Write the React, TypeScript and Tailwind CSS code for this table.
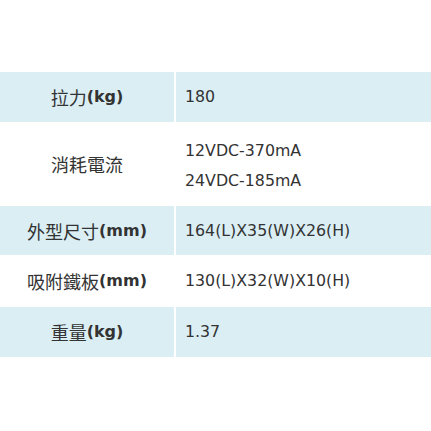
import React from "react";

const latin = "font-['DejaVu_Sans','Noto_Sans_CJK_TC',sans-serif]";

type Row = { cjk: string; unit?: string; values: string[]; blue: boolean; h: string };

const rows: Row[] = [
  { cjk: "拉力", unit: "(kg)", values: ["180"], blue: true, h: "h-[50px]" },
  { cjk: "消耗電流", values: ["12VDC-370mA", "24VDC-185mA"], blue: false, h: "h-[84px]" },
  { cjk: "外型尺寸", unit: "(mm)", values: ["164(L)X35(W)X26(H)"], blue: true, h: "h-[49px]" },
  { cjk: "吸附鐵板", unit: "(mm)", values: ["130(L)X32(W)X10(H)"], blue: false, h: "h-[52px]" },
  { cjk: "重量", unit: "(kg)", values: ["1.37"], blue: true, h: "h-[50px]" },
];

export default function App() {
  return (
    <div className={`w-[431px] h-[431px] bg-white pt-[72px] text-[#333333] ${latin}`}>
      <div className="flex flex-col">
        {rows.map((r, i) => (
          <div key={i} className={`flex gap-[2px] ${r.h}`}>
            <div
              className={`w-[174px] shrink-0 flex items-center justify-center ${r.blue ? "bg-[#daeef3]" : "bg-white"}`}
            >
              <span className="font-['Noto_Sans_CJK_TC',sans-serif] text-[18px] leading-none">{r.cjk}</span>
              {r.unit && (
                <span className="font-['DejaVu_Sans',sans-serif] font-bold text-[16px] leading-none">{r.unit}</span>
              )}
            </div>
            <div
              className={`flex-1 flex flex-col justify-center pl-[9px] ${r.values.length > 1 ? "pt-[4px]" : ""} ${r.blue ? "bg-[#daeef3]" : "bg-white"}`}
            >
              {r.values.map((v, j) => (
                <div key={j} className="text-[15.8px] leading-[30px]">
                  {v}
                </div>
              ))}
            </div>
          </div>
        ))}
      </div>
    </div>
  );
}
